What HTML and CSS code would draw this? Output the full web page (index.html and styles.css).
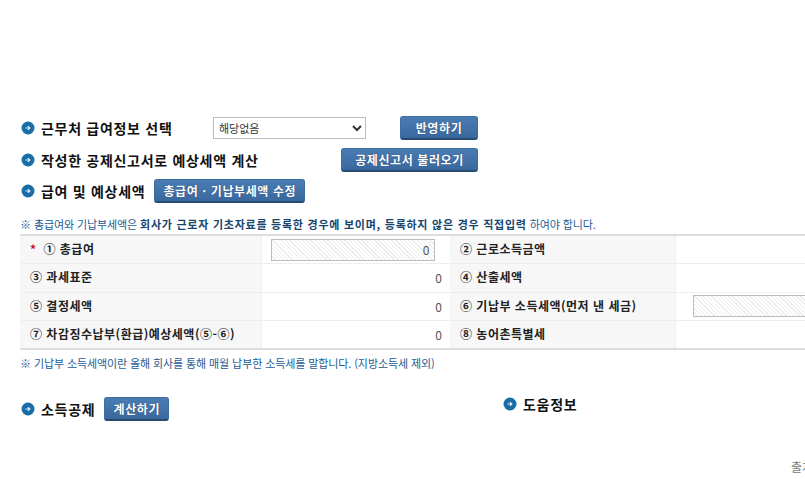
FILE: index.html
```html
<!DOCTYPE html>
<html lang="ko">
<head>
    <meta charset="UTF-8">
    <meta name="viewport" content="width=device-width, initial-scale=1.0">
    <title>근무처 급여정보 선택</title>
    <link rel="stylesheet" href="styles.css">
</head>
<body>
    <div class="wrap">
        <div class="title-row row-first">
            <svg class="bullet" viewBox="0 0 14 14"><circle cx="7" cy="7" r="6.5" fill="#1a6ea8"/><path d="M4.5 7h4.5M7 5.3L8.8 7 7 8.7" fill="none" stroke="#dfeaf3" stroke-width="1.2"/></svg>
            <h3 class="title title-pay">근무처 급여정보 선택</h3>
            <select class="pay-select"><option>해당없음</option></select>
            <button class="btn btn-apply">반영하기</button>
        </div>
        <div class="title-row row-second">
            <svg class="bullet" viewBox="0 0 14 14"><circle cx="7" cy="7" r="6.5" fill="#1a6ea8"/><path d="M4.5 7h4.5M7 5.3L8.8 7 7 8.7" fill="none" stroke="#dfeaf3" stroke-width="1.2"/></svg>
            <h3 class="title title-calc">작성한 공제신고서로 예상세액 계산</h3>
            <button class="btn btn-load">공제신고서 불러오기</button>
        </div>
        <div class="title-row row-third">
            <svg class="bullet" viewBox="0 0 14 14"><circle cx="7" cy="7" r="6.5" fill="#1a6ea8"/><path d="M4.5 7h4.5M7 5.3L8.8 7 7 8.7" fill="none" stroke="#dfeaf3" stroke-width="1.2"/></svg>
            <h3 class="title">급여 및 예상세액</h3>
            <button class="btn btn-edit">총급여 · 기납부세액 수정</button>
        </div>

        <p class="note note-top">※ 총급여와 기납부세액은 <b>회사가 근로자 기초자료를 등록한 경우에 보이며, 등록하지 않은 경우 직접입력</b> 하여야 합니다.</p>

        <table class="tax-table">
            <colgroup>
                <col class="col-head1"><col class="col-val1"><col class="col-head2"><col class="col-val2">
            </colgroup>
            <tr>
                <th><span class="star">*</span> ① 총급여</th>
                <td><input class="hatch hatch-first" type="text" value="0" readonly></td>
                <th>② 근로소득금액</th>
                <td></td>
            </tr>
            <tr>
                <th>③ 과세표준</th>
                <td>0</td>
                <th>④ 산출세액</th>
                <td></td>
            </tr>
            <tr>
                <th>⑤ 결정세액</th>
                <td>0</td>
                <th>⑥ 기납부 소득세액(먼저 낸 세금)</th>
                <td><input class="hatch hatch-second" type="text" readonly></td>
            </tr>
            <tr>
                <th>⑦ 차감징수납부(환급)예상세액(⑤-⑥)</th>
                <td>0</td>
                <th>⑧ 농어촌특별세</th>
                <td></td>
            </tr>
        </table>

        <p class="note note-bottom">※ 기납부 소득세액이란 올해 회사를 통해 매월 납부한 소득세를 말합니다. (지방소득세 제외)</p>

        <div class="bottom-row">
            <div class="title-row deduct">
                <svg class="bullet" viewBox="0 0 14 14"><circle cx="7" cy="7" r="6.5" fill="#1a6ea8"/><path d="M4.5 7h4.5M7 5.3L8.8 7 7 8.7" fill="none" stroke="#dfeaf3" stroke-width="1.2"/></svg>
                <h3 class="title">소득공제</h3>
                <button class="btn btn-calc">계산하기</button>
            </div>
            <div class="title-row help">
                <svg class="bullet" viewBox="0 0 14 14"><circle cx="7" cy="7" r="6.5" fill="#1a6ea8"/><path d="M4.5 7h4.5M7 5.3L8.8 7 7 8.7" fill="none" stroke="#dfeaf3" stroke-width="1.2"/></svg>
                <h3 class="title">도움정보</h3>
            </div>
        </div>

        <div class="source">출처</div>
    </div>
</body>
</html>
```

FILE: styles.css
```css
html, body {
    margin: 0;
    padding: 0;
    background-color: #fff;
    overflow: hidden;
    height: 479px;
}

body {
    font-family: "Noto Sans CJK KR", "Liberation Sans", sans-serif;
    color: #222;
}

.wrap {
    width: 900px;
    padding: 116px 0 0 21px;
    box-sizing: border-box;
}

.title-row {
    display: flex;
    align-items: center;
}

.row-first { height: 24px; }
.row-second { height: 24px; margin-top: 8px; }
.row-third { height: 24px; margin-top: 7px; }

.bullet {
    width: 14px;
    height: 14px;
    flex: none;
    margin-right: 6px;
}

.title {
    margin: 0;
    font-size: 14px;
    line-height: 18px;
    font-weight: 700;
    letter-spacing: .7px;
    color: #111;
    white-space: nowrap;
}

.title-pay { width: 172px; }
.title-calc { width: 300px; }

.pay-select {
    width: 153px;
    height: 22px;
    font-family: inherit;
    font-size: 11px;
    color: #333;
    background-color: #fff;
    border: 1px solid #bbb;
    padding: 0 0 0 1px;
}

.btn {
    height: 24px;
    padding: 0;
    border: 1px solid #3e6c9f;
    border-bottom: 2px solid #264a72;
    border-radius: 3px;
    background: linear-gradient(#4a7cb4, #3a689e);
    color: #fff;
    font-family: inherit;
    font-size: 12px;
    font-weight: 700;
    letter-spacing: .6px;
    text-shadow: 0 0 1px #1d3f66;
    white-space: nowrap;
}

.btn-apply { width: 78px; margin-left: 34px; }
.btn-load { width: 137px; }
.btn-edit { width: 151px; margin-left: 9px; }
.btn-calc { width: 65px; margin-left: 9px; }

.note {
    margin: 0 0 0 -1px;
    font-size: 11px;
    line-height: 16px;
    letter-spacing: -.1px;
    color: #1c5c94;
    white-space: nowrap;
}

.note-top { margin-top: 13px; }
.note-bottom { margin-top: 5px; }

.note b { font-weight: 700; color: #17456f; letter-spacing: .75px; }

.tax-table {
    margin-top: 2px;
    margin-left: -1px;
    width: 880px;
    table-layout: fixed;
    border-collapse: collapse;
    border-top: 2px solid #ddd;
    border-bottom: 2px solid #ddd;
    font-size: 12px;
}

.col-head1 { width: 241px; }
.col-val1 { width: 189px; }
.col-head2 { width: 225px; }

.tax-table tr { height: 28.5px; }

.tax-table th {
    background-color: #f7f7f7;
    border-top: 1px solid #eee;
    border-right: 1px solid #eee;
    padding: 0 0 2px 10px;
    font-weight: 700;
    letter-spacing: .5px;
    text-align: left;
    color: #222;
    white-space: nowrap;
}

.tax-table td {
    border-top: 1px solid #eee;
    padding: 0 8px 0 0;
    text-align: right;
    color: #555;
}

.star { color: #c8102e; margin-right: 3px; }

.hatch {
    display: block;
    height: 22px;
    box-sizing: border-box;
    border: 1px solid #bbb;
    text-align: right;
    font-family: inherit;
    font-size: 12px;
    color: #555;
    padding: 0 4px;
    background: repeating-linear-gradient(45deg, #fff, #fff 2px, #ececec 2px, #ececec 3px);
}

.hatch-first { width: 164px; margin-left: 9px; }
.hatch-second { width: 190px; margin-left: 17px; }

.bottom-row {
    display: flex;
    margin-top: 26px;
}

.deduct { width: 482px; height: 24px; }
.help { height: 24px; margin-top: -5px; }

.source {
    margin-top: 37px;
    margin-left: 770px;
    font-size: 12px;
    color: #777;
    white-space: nowrap;
}
```
